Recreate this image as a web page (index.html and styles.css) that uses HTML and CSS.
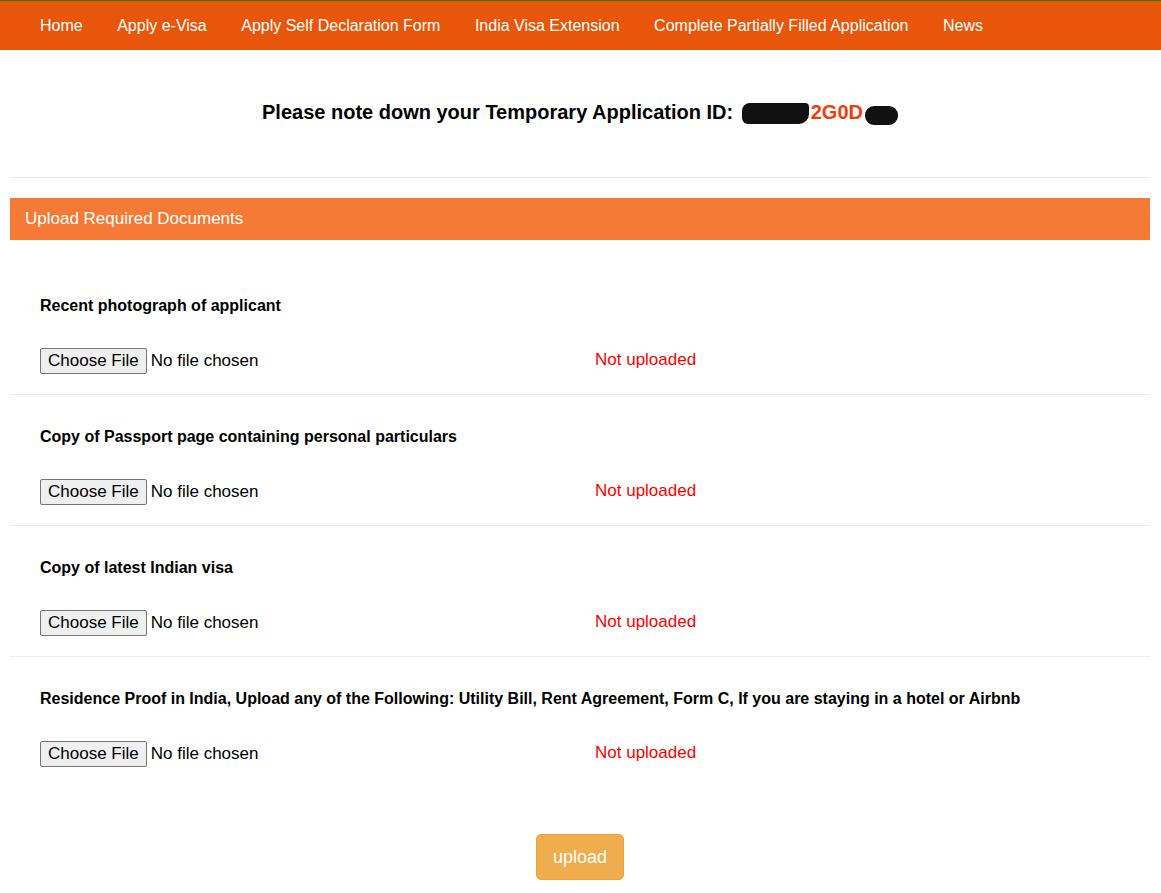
FILE: index.html
```html
<!DOCTYPE html>
<html lang="en">
<head>
    <meta charset="UTF-8">
    <meta name="viewport" content="width=device-width, initial-scale=1.0">
    <title>Upload Documents</title>
    <link rel="stylesheet" href="styles.css">
</head>
<body>
    <nav class="topnav">
        <a href="#">Home</a>
        <a href="#">Apply e-Visa</a>
        <a href="#">Apply Self Declaration Form</a>
        <a href="#">India Visa Extension</a>
        <a href="#">Complete Partially Filled Application</a>
        <a href="#">News</a>
    </nav>

    <main class="container">
        <h3 class="temp-id">
            Please note down your Temporary Application ID:
            <span class="app-id"><span class="redact redact-long"></span>2G0D<span class="redact redact-short"></span></span>
        </h3>
        <hr class="divider">

        <section class="panel">
            <div class="panel-heading">Upload Required Documents</div>
            <div class="panel-body">
                <div class="doc-row">
                    <label class="doc-label">Recent photograph of applicant</label>
                    <div class="doc-fields">
                        <div class="col"><input type="file" class="file-input"></div>
                        <div class="col status">Not uploaded</div>
                    </div>
                </div>
                <div class="doc-row">
                    <label class="doc-label">Copy of Passport page containing personal particulars</label>
                    <div class="doc-fields">
                        <div class="col"><input type="file" class="file-input"></div>
                        <div class="col status">Not uploaded</div>
                    </div>
                </div>
                <div class="doc-row">
                    <label class="doc-label">Copy of latest Indian visa</label>
                    <div class="doc-fields">
                        <div class="col"><input type="file" class="file-input"></div>
                        <div class="col status">Not uploaded</div>
                    </div>
                </div>
                <div class="doc-row last">
                    <label class="doc-label">Residence Proof in India, Upload any of the Following: Utility Bill, Rent Agreement, Form C, If you are staying in a hotel or Airbnb</label>
                    <div class="doc-fields">
                        <div class="col"><input type="file" class="file-input"></div>
                        <div class="col status">Not uploaded</div>
                    </div>
                </div>
            </div>
        </section>

        <div class="actions">
            <button class="btn-upload">upload</button>
        </div>
    </main>
</body>
</html>
```

FILE: styles.css
```css
html, body {
    overflow: hidden;
}
body {
    margin: 0;
    font-family: "Liberation Sans", Arial, sans-serif;
    font-size: 16px;
    color: #000;
    background-color: #fff;
}
.topnav {
    display: flex;
    align-items: center;
    height: 49px;
    padding-left: 22.75px;
    background-color: #e7560a;
    border-top: 1px solid #2d7a12;
}
.topnav a {
    color: #fff;
    text-decoration: none;
    font-size: 16px;
    padding: 0 17.25px;
}
.container {
    width: 1140px;
    margin: 0 11px 0 10px;
}
.temp-id {
    margin: 0;
    padding-top: 51px;
    height: 76px;
    text-align: center;
    font-size: 20px;
    font-weight: bold;
    line-height: 23px;
}
.app-id {
    color: #f23d0c;
}
.redact {
    display: inline-block;
    background-color: #111;
    vertical-align: -5px;
}
.redact-long {
    width: 67px;
    height: 21px;
    margin-left: 3px;
    margin-right: 2px;
    border-radius: 8px 4px 10px 6px;
}
.redact-short {
    width: 33px;
    height: 19px;
    margin-left: 2px;
    vertical-align: -6px;
    border-radius: 9px;
}
.divider {
    margin: 0;
    border: 0;
    border-top: 1px solid #eaeaea;
}
.panel {
    margin-top: 20px;
}
.panel-heading {
    background-color: #f47a35;
    color: #fff;
    font-size: 17px;
    height: 42px;
    line-height: 42px;
    padding: 0 15px;
}
.panel-body {
    padding-top: 24px;
}
.doc-row {
    padding: 32px 30px 20px;
    border-bottom: 1px solid #ececec;
}
.doc-row.last {
    border-bottom: none;
}
.doc-label {
    display: block;
    font-weight: bold;
    font-size: 16px;
    line-height: 20px;
    margin-bottom: 32px;
}
.doc-fields {
    display: flex;
    align-items: center;
    height: 26px;
}
.col {
    flex: 0 0 555px;
}
.col.status {
    flex: 1;
    color: #f00;
    font-size: 17px;
    margin-top: -3px;
}
.file-input {
    font-family: "Liberation Sans", Arial, sans-serif;
    font-size: 17px;
    color: #000;
}
.file-input::file-selector-button {
    font-family: "Liberation Sans", Arial, sans-serif;
    font-size: 17px;
    height: 26px;
    padding: 0 7px;
    margin-right: 4px;
    background-color: #efefef;
    border: 1px solid #767676;
    border-radius: 2px;
    color: #000;
}
.actions {
    text-align: center;
    padding-top: 47px;
}
.btn-upload {
    font-family: "Liberation Sans", Arial, sans-serif;
    font-size: 18px;
    color: #fff;
    background-color: #f0ad4e;
    border: 1px solid #eea236;
    border-radius: 5px;
    width: 88px;
    height: 46px;
    cursor: pointer;
}
```
